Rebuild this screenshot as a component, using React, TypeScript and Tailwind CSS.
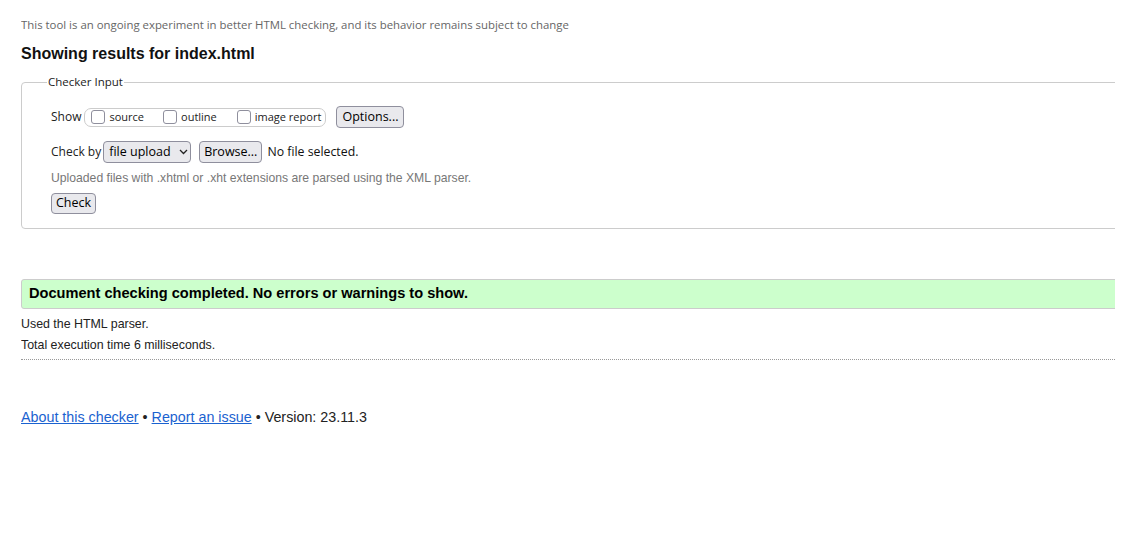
import React from 'react';

const ui = { fontFamily: '"Open Sans", "Noto Sans", sans-serif' };
const arial = { fontFamily: '"Liberation Sans", Arial, sans-serif' };

const Box: React.FC<{ label: string; gap?: string }> = ({ label, gap = '' }) => (
  <span className={`flex shrink-0 items-center whitespace-nowrap ${gap}`}>
    <span className="inline-block h-[14px] w-[14px] rounded-[3px] border border-[#8f8f9d] bg-white" />
    <span className="ml-[4px] text-[11px] text-[#222]">{label}</span>
  </span>
);

const Btn: React.FC<{ children: React.ReactNode; className?: string }> = ({ children, className = '' }) => (
  <span
    className={`inline-flex items-center whitespace-nowrap rounded-[4px] border border-[#8f8f9d] bg-[#e9e9ed] text-[12.5px] leading-none text-black ${className}`}
  >
    {children}
  </span>
);

const App: React.FC = () => {
  return (
    <div className="min-h-[535px] bg-white text-[#111]" style={arial}>
      <div className="ml-[21px] w-[1094px] overflow-hidden">
        <p className="pt-[17px] text-[11.4px] leading-[16px] text-[#666]" style={ui}>
          This tool is an ongoing experiment in better HTML checking, and its behavior remains subject to change
        </p>
        <h2 className="mt-[10px] text-[16px] font-bold leading-[22px] text-[#111]">Showing results for index.html</h2>

        {/* checker input */}
        <fieldset className="mt-[10px] w-[1120px] rounded-[4px] border border-[#ccc] pl-[29px] pb-[14px] pt-[17px]" style={ui}>
          <legend className="-ml-[4px] px-[1px] text-[11.5px] leading-[14px] text-[#222]">Checker Input</legend>

          <div className="flex items-center">
            <span className="text-[12px] text-[#222]">Show</span>
            <span className="ml-[3px] flex h-[19px] w-[242px] items-center rounded-[7px] border border-[#ccc] pl-[6px]">
              <Box label="source" />
              <Box label="outline" gap="ml-[19px]" />
              <Box label="image report" gap="ml-[20px]" />
            </span>
            <Btn className="ml-[10px] h-[22px] px-[5px]">Options...</Btn>
          </div>

          <div className="mt-[13px] flex items-center">
            <span className="text-[12px] text-[#222]">Check by</span>
            <Btn className="ml-[2px] h-[22px] w-[88px] pl-[5px]">
              file upload
              <svg className="ml-[8px]" width="9" height="6" viewBox="0 0 9 6" fill="none">
                <path d="M1 1l3.5 3.5L8 1" stroke="#222" strokeWidth="1.3" />
              </svg>
            </Btn>
            <Btn className="ml-[8px] h-[22px] px-[4px]">Browse...</Btn>
            <span className="ml-[5px] text-[12.3px] text-[#111]">No file selected.</span>
          </div>

          <p className="mt-[7px] text-[12.2px] leading-[16px] text-[#777]" style={arial}>
            Uploaded files with .xhtml or .xht extensions are parsed using the XML parser.
          </p>
          <Btn className="mt-[7px] h-[21px] px-[4px]">Check</Btn>
        </fieldset>

        {/* result */}
        <div className="mt-[50px] flex h-[30px] w-[1120px] items-center rounded-[3px] border border-[#ccc] bg-[#ccffcc] pl-[7px]">
          <span className="text-[14.6px] font-bold text-black">Document checking completed. No errors or warnings to show.</span>
        </div>
        <p className="mt-[7px] text-[12.4px] leading-[16px] text-[#222]">Used the HTML parser.</p>
        <p className="mt-[5px] text-[12.4px] leading-[16px] text-[#222]">Total execution time 6 milliseconds.</p>
        <div className="mt-[6px] border-t border-dotted border-[#999]" />

        <p className="mt-[48px] text-[14.3px] leading-[18px] text-[#222]">
          <a href="#" className="text-[#1a62d0] underline">About this checker</a>
          {' • '}
          <a href="#" className="text-[#1a62d0] underline">Report an issue</a>
          {' • Version: 23.11.3'}
        </p>
      </div>
    </div>
  );
};

export default App;
